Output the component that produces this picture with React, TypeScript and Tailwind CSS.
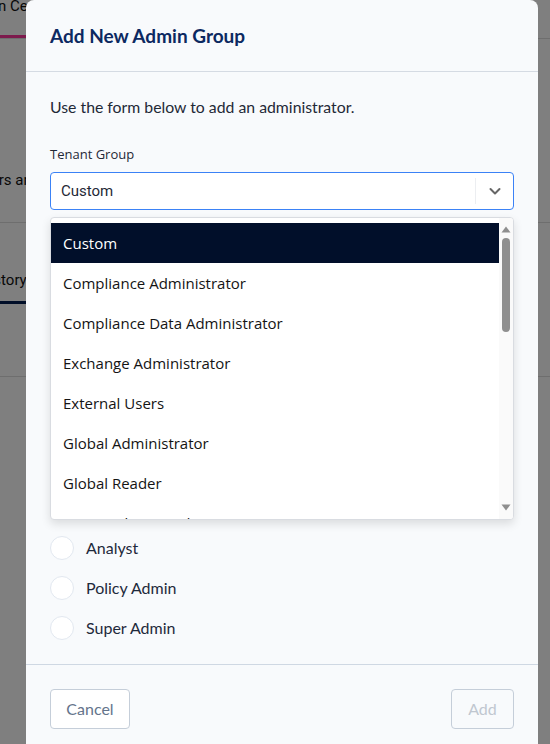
import React from "react";

const lato = { fontFamily: "Lato, 'Noto Sans', sans-serif" };
const ui = { fontFamily: "Roboto, 'Noto Sans', sans-serif" };
const segoe = { fontFamily: "'Open Sans', 'Noto Sans', sans-serif" };

const options = [
  "Custom",
  "Compliance Administrator",
  "Compliance Data Administrator",
  "Exchange Administrator",
  "External Users",
  "Global Administrator",
  "Global Reader",
  "KWN Exchange Admin M365",
  "Security Administrator",
];

const hiddenRoles = ["Read Only", "Help Desk", "Billing Admin", "Security Admin", "Auditor", "Operator"];
const roles = [...hiddenRoles, "Analyst", "Policy Admin", "Super Admin"];

export default function App() {
  return (
    <div className="relative w-[550px] h-[744px] overflow-hidden bg-white" style={ui}>
      {/* page behind the modal */}
      <div className="flex flex-col">
        <div className="h-[35px] flex items-start">
          <span className="text-[15px] text-[#111] leading-[18px] -ml-[37px] -mt-[3px] whitespace-nowrap">Admin Center</span>
        </div>
        <div className="h-[3px] w-[120px] bg-[#fa349a]" />
        <div className="h-px bg-[#dcdcdc]" />
        <div className="h-[183px] flex items-start pt-[132px]">
          <span className="text-[15px] leading-[18px] text-[#111] -ml-[83px] whitespace-nowrap">Manage users and groups</span>
        </div>
        <div className="h-px bg-[#dcdcdc]" />
        <div className="h-[81px] flex items-end">
          <div className="flex flex-col -ml-[21px]">
            <span className="text-[15px] text-[#111] pb-[10px]">History</span>
            <div className="h-[3px] bg-[#001c50]" />
          </div>
        </div>
        <div className="h-[72px]" />
        <div className="h-px bg-[#dcdcdc]" />
      </div>

      {/* overlay */}
      <div className="absolute inset-0 bg-black/50" />

      {/* modal */}
      <div className="absolute left-[26px] top-0 w-[512px] h-[800px] bg-[#f8fafc] rounded-t-[8px] flex flex-col">
        <div className="h-[72px] px-6 flex items-center border-b border-[#d5dbe3]" style={lato}>
          <h1 className="text-[19px] font-bold text-[#0c2961] leading-none -mt-[1px]">Add New Admin Group</h1>
        </div>

        <div className="relative px-6 pt-[24px] pb-4 border-b border-[#cfd8e3]">
          <p className="text-[15.8px] leading-[22px] text-[#1f2937]" style={lato}>
            Use the form below to add an administrator.
          </p>
          <label className="block mt-[27px] text-[13px] leading-[18px] text-[#1f2937]" style={segoe}>
            Tenant Group
          </label>
          <div className="mt-[9px] h-[38px] rounded-[4px] border border-[#3b82f6] bg-white flex items-center">
            <span className="flex-1 pl-[10px] text-[15px] text-[#1f2937]">Custom</span>
            <div className="w-px h-[26px] bg-[#eceef1]" />
            <div className="w-[37px] flex items-center justify-center">
              <svg width="14" height="14" viewBox="0 0 14 14" fill="none">
                <path d="M2.5 5l4.5 4.5L11.5 5" stroke="#666" strokeWidth="2" strokeLinecap="round" strokeLinejoin="round" />
              </svg>
            </div>
          </div>

          <label className="block mt-[40px] text-[13px] leading-[18px] text-[#1f2937]">Role</label>
          <div className="mt-[20px] flex flex-col" style={lato}>
            {roles.map((r) => (
              <div key={r} className="h-[40px] flex items-center gap-3">
                <div className="w-[24px] h-[24px] rounded-full border border-[#e2e8f0] bg-white" />
                <span className="text-[16px] text-[#1e293b]">{r}</span>
              </div>
            ))}
          </div>

          {/* open dropdown list */}
          <div className="absolute left-6 right-6 top-[145px] h-[303px] bg-white border border-[#d9dce1] rounded-[4px] shadow-[0_4px_10px_rgba(0,0,0,0.12)] flex overflow-hidden">
            <div className="flex-1 pt-[5px] flex flex-col" style={segoe}>
              {options.map((o, i) => (
                <div
                  key={o}
                  className={`h-[40px] shrink-0 flex items-center px-3 text-[15px] whitespace-nowrap ${i === 0 ? "bg-[#010f2a] text-white" : "text-[#141414]"}`}
                >
                  {o}
                </div>
              ))}
            </div>
            <div className="w-[14px] bg-[#fafafa] flex flex-col items-center pt-[8px] pb-[8px]">
              <svg width="10" height="7" viewBox="0 0 10 7">
                <path d="M5 0.5L9.5 6.5H0.5z" fill="#8f8f8f" />
              </svg>
              <div className="mt-[5px] w-[8px] h-[94px] rounded-full bg-[#8f8f8f]" />
              <div className="flex-1" />
              <svg width="10" height="7" viewBox="0 0 10 7">
                <path d="M0.5 0.5H9.5L5 6.5z" fill="#8f8f8f" />
              </svg>
            </div>
          </div>
        </div>

        <div className="px-6 pt-6 flex justify-between" style={lato}>
          <button className="h-[40px] w-[80px] rounded-[4px] border border-[#c5ced9] bg-white text-[16px] text-[#64748b]">
            Cancel
          </button>
          <button className="h-[40px] w-[63px] rounded-[4px] border border-[#c5ced9] text-[16px] text-[#c0c7d0]" disabled>
            Add
          </button>
        </div>
      </div>
    </div>
  );
}
